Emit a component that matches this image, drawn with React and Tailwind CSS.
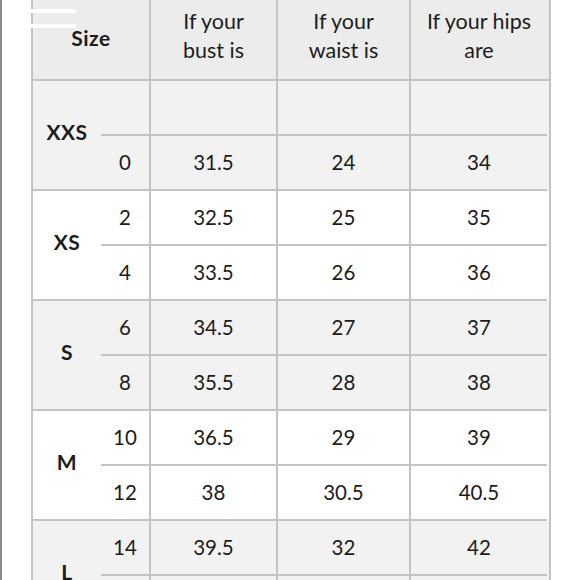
const groups = [
  { label: "XXS", bg: "bg-[#f2f2f2]", rows: [["", "", "", ""], ["0", "31.5", "24", "34"]] },
  { label: "XS", bg: "bg-white", rows: [["2", "32.5", "25", "35"], ["4", "33.5", "26", "36"]] },
  { label: "S", bg: "bg-[#f2f2f2]", rows: [["6", "34.5", "27", "37"], ["8", "35.5", "28", "38"]] },
  { label: "M", bg: "bg-white", rows: [["10", "36.5", "29", "39"], ["12", "38", "30.5", "40.5"]] },
  // second L row sits below the fold
  { label: "L", bg: "bg-[#f2f2f2]", rows: [["14", "39.5", "32", "42"], ["", "", "", ""]] },
];

const widths = ["w-[48px]", "w-[127px]", "w-[133px]", "w-[138px]"];

function SubRow({ cells }) {
  return (
    <div className="flex h-[55px] border-b-2 border-[#c4c4c4]">
      {cells.map((value, i) => (
        <div
          key={i}
          className={`${widths[i]} flex items-center justify-center ${i > 0 ? "border-l-2 border-[#c4c4c4]" : ""}`}
        >
          {value}
        </div>
      ))}
    </div>
  );
}

export default function App() {
  return (
    <div
      className="relative h-[580px] w-[580px] overflow-hidden border-l-2 border-[#8a8a8a] bg-white pl-[29px] text-[20.5px] text-[#1c1c1c]"
      style={{ fontFamily: "Lato, 'Open Sans', sans-serif" }}
    >
      <div className="w-[520px] border-x-2 border-[#c4c4c4]">
        {/* header */}
        <div className="flex h-[81px] border-b-2 border-[#c4c4c4] bg-[#ececec] text-[21.5px] leading-[29px]">
          <div className="flex w-[116px] items-center justify-center pb-1 text-[21px] font-bold tracking-[0.5px]">
            Size
          </div>
          <div className="flex w-[127px] items-center justify-center border-l-2 border-[#c4c4c4] pb-2 text-center">
            If your
            <br />
            bust is
          </div>
          <div className="flex w-[133px] items-center justify-center border-l-2 border-[#c4c4c4] pb-2 text-center">
            If your
            <br />
            waist is
          </div>
          <div className="flex w-[138px] items-center justify-center border-l-2 border-[#c4c4c4] pb-2 text-center">
            If your hips
            <br />
            are
          </div>
        </div>

        {groups.map((group) => (
          <div key={group.label} className={`flex ${group.bg}`}>
            <div className="flex w-[68px] items-center justify-center border-b-2 border-[#c4c4c4] pb-[6px] text-[21px] font-bold tracking-[0.5px]">
              {group.label}
            </div>
            <div className="flex flex-col">
              {group.rows.map((cells, i) => (
                <SubRow key={i} cells={cells} />
              ))}
            </div>
          </div>
        ))}
      </div>

      {/* overlay bars */}
      <div className="absolute left-[26px] top-[9px] h-[4px] w-[48px] bg-white" />
      <div className="absolute left-[26px] top-[24px] h-[4px] w-[48px] bg-white" />
    </div>
  );
}
